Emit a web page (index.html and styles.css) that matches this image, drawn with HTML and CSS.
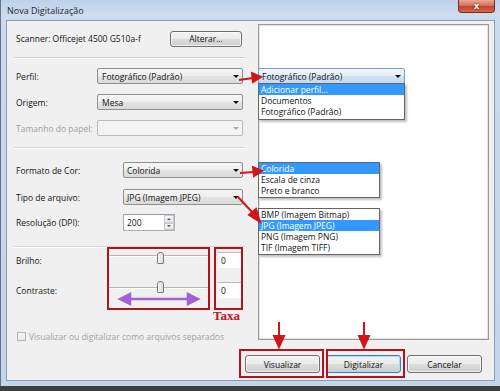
FILE: index.html
```html
<!DOCTYPE html>
<html lang="pt-BR">
<head>
<meta charset="UTF-8">
<title>Nova Digitalização</title>
<link rel="stylesheet" href="styles.css">
</head>
<body>
<div class="window">
    <div class="titlebar">
        <span class="title">Nova Digitalização</span>
        <div class="close-btn">x</div>
    </div>

    <div class="client">
        <div class="settings">
            <div class="row row-tall">
                <span class="label">Scanner: Officejet 4500 G510a-f</span>
                <div class="button button-change">Alterar...</div>
            </div>
            <div class="separator sep-1"></div>

            <div class="row row-perfil">
                <span class="label">Perfil:</span>
                <div class="combo">Fotográfico (Padrão)<i class="caret"></i></div>
            </div>
            <div class="row row-next">
                <span class="label">Origem:</span>
                <div class="combo">Mesa<i class="caret"></i></div>
            </div>
            <div class="row row-next disabled">
                <span class="label">Tamanho do papel:</span>
                <div class="combo"><i class="caret"></i></div>
            </div>
            <div class="separator sep-2"></div>

            <div class="row row-format">
                <span class="label">Formato de Cor:</span>
                <div class="combo combo-short">Colorida<i class="caret"></i></div>
            </div>
            <div class="row row-type">
                <span class="label">Tipo de arquivo:</span>
                <div class="combo combo-short">JPG (Imagem JPEG)<i class="caret"></i></div>
            </div>
            <div class="row row-tall row-dpi">
                <span class="label label-wide">Resolução (DPI):</span>
                <div class="spin">
                    <span class="spin-value">200</span>
                    <span class="spin-arrows">
                        <span class="spin-btn"><i class="up"></i></span>
                        <span class="spin-btn"><i class="down"></i></span>
                    </span>
                </div>
            </div>
            <div class="separator sep-3"></div>

            <div class="row row-bright">
                <span class="label">Brilho:</span>
                <div class="slider"><span class="track"></span><span class="thumb"></span></div>
                <div class="num">0</div>
            </div>
            <div class="row row-contrast">
                <span class="label">Contraste:</span>
                <div class="slider"><span class="track"></span><span class="thumb"></span></div>
                <div class="num">0</div>
            </div>

            <div class="row row-check disabled">
                <span class="checkbox"></span>
                <span class="label">Visualizar ou digitalizar como arquivos separados</span>
            </div>
        </div>

        <div class="preview"></div>

        <div class="footer">
            <div class="button">Visualizar</div>
            <div class="button button-default">Digitalizar</div>
            <div class="button">Cancelar</div>
        </div>
    </div>

    <!-- listas abertas coladas sobre a pré-visualização -->
    <div class="open-combo">Fotográfico (Padrão)<i class="caret"></i></div>
    <ul class="listbox list-profile">
        <li class="selected">Adicionar perfil...</li>
        <li>Documentos</li>
        <li>Fotográfico (Padrão)</li>
    </ul>
    <ul class="listbox list-color">
        <li class="selected">Colorida</li>
        <li>Escala de cinza</li>
        <li>Preto e branco</li>
    </ul>
    <ul class="listbox list-type">
        <li>BMP (Imagem Bitmap)</li>
        <li class="selected">JPG (Imagem JPEG)</li>
        <li>PNG (Imagem PNG)</li>
        <li>TIF (Imagem TIFF)</li>
    </ul>

    <svg class="marks" width="500" height="391" viewBox="0 0 500 391">
        <g fill="none" stroke="#b3141c" stroke-width="2">
            <rect x="108" y="248" width="101" height="61"/>
            <rect x="215" y="248" width="27" height="61"/>
            <rect x="240" y="350" width="83" height="27"/>
            <rect x="327" y="350" width="77" height="27"/>
        </g>
        <g stroke="#d0161b" stroke-width="2" fill="#d0161b">
            <line x1="239" y1="80" x2="253" y2="78"/>
            <polygon points="261,77 252,73 253,82"/>
            <line x1="240" y1="173" x2="254" y2="172"/>
            <polygon points="262,171 253,167 254,176"/>
            <line x1="238" y1="197" x2="253" y2="213"/>
            <polygon points="260,222 249,215 256,209"/>
            <line x1="279" y1="322" x2="279" y2="337"/>
            <polygon points="279,347 274,336 284,336"/>
            <line x1="364" y1="322" x2="364" y2="337"/>
            <polygon points="364,347 359,336 369,336"/>
        </g>
        <g stroke="#a061d6" stroke-width="2.5" fill="#a061d6">
            <line x1="128" y1="299" x2="190" y2="299"/>
            <polygon points="120,299 130,294 130,304"/>
            <polygon points="198,299 188,294 188,304"/>
        </g>
    </svg>
    <span class="taxa">Taxa</span>
</div>
</body>
</html>
```

FILE: styles.css
```css
body {
    margin: 0;
    background-color: #3e3e3e;
    font-family: "Open Sans", "Noto Sans", sans-serif;
    font-size: 8.5px;
    color: #141414;
}

.window {
    position: relative;
    width: 500px;
    height: 386px;
    box-sizing: border-box;
    padding: 0 5px 5px 5px;
    border-left: 1px solid #62758b;
    background: linear-gradient(180deg, #bdd1e8 0, #cddcee 14px, #c9daed 40px, #c2d5ea 100%);
    overflow: hidden;
}

.titlebar {
    display: flex;
    align-items: flex-start;
    height: 20px;
}

.title {
    padding: 4px 0 0 1px;
    font-size: 9px;
    color: #1e2733;
}

.close-btn {
    margin-left: auto;
    width: 35px;
    height: 12px;
    line-height: 11px;
    text-align: center;
    color: #fff;
    font-weight: bold;
    font-size: 9px;
    text-shadow: 0 0 2px #5a1208;
    border: 1px solid #7b2b20;
    border-top: none;
    border-radius: 0 0 4px 4px;
    background: linear-gradient(180deg, #e9a699 0, #d7735f 45%, #c2432b 55%, #d66a48 100%);
}

/* área cinza da janela */
.client {
    display: grid;
    grid-template-columns: 245px 1fr;
    grid-template-rows: 324px 1fr;
    height: 361px;
    box-sizing: border-box;
    border: 1px solid #8a9db3;
    background-color: #f0f0f0;
}

.settings {
    padding: 9px 9px 0 9px;
}

.row {
    display: flex;
    align-items: center;
    height: 16px;
}

.row-tall { height: 17px; }
.row-perfil { margin-top: 9px; }
.row-next { margin-top: 10px; }
.row-format { margin-top: 13px; }
.row-type { margin-top: 11px; }
.row-dpi { margin-top: 9px; }
.row-bright { margin-top: 4px; }
.row-contrast { margin-top: 14px; }
.row-check { margin-top: 31px; height: 14px; }

.label {
    flex: none;
    white-space: nowrap;
}

.label-wide { width: 107px; }

.disabled .label { color: #a2a2a2; }

.separator {
    height: 0;
    margin: 0 -2px;
    border-top: 1px solid #d5d5d5;
    border-bottom: 1px solid #fff;
}

.sep-1 { margin-top: 10px; }
.sep-2 { margin-top: 11px; }
.sep-3 { margin-top: 15px; }

.button {
    display: flex;
    align-items: center;
    justify-content: center;
    width: 75px;
    height: 18px;
    box-sizing: border-box;
    border: 1px solid #707070;
    border-radius: 3px;
    background: linear-gradient(180deg, #f2f2f2 0, #ebebeb 50%, #dddddd 51%, #cfcfcf 100%);
    box-shadow: inset 0 0 0 1px rgba(255, 255, 255, 0.7);
}

.button-change {
    margin-left: auto;
    width: 72px;
    height: 16px;
    margin-right: 1px;
}

.button-default {
    border-color: #3c7fb1;
    box-shadow: inset 0 0 0 1px #a8dcf7;
}

.combo {
    display: flex;
    align-items: center;
    margin-left: auto;
    width: 146px;
    height: 16px;
    box-sizing: border-box;
    padding-left: 4px;
    border: 1px solid #8e8f8f;
    border-radius: 2px;
    background: linear-gradient(180deg, #f6f6f6 0, #eeeeee 50%, #e4e4e4 51%, #dadada 100%);
}

.combo-short { width: 120px; padding-left: 3px; }

.disabled .combo {
    border-color: #b8bcbf;
    background: #f4f4f4;
}

.caret {
    margin-left: auto;
    margin-right: 3px;
    width: 0;
    height: 0;
    border-left: 3px solid transparent;
    border-right: 3px solid transparent;
    border-top: 3px solid #111;
}

.disabled .caret { border-top-color: #a8a8a8; }

.spin {
    display: flex;
    width: 52px;
    height: 17px;
    box-sizing: border-box;
    border: 1px solid #abadb3;
    border-top-color: #9a9da3;
    background-color: #fff;
}

.spin-value {
    flex: 1;
    padding: 2px 0 0 3px;
}

.spin-arrows {
    display: flex;
    flex-direction: column;
    width: 10px;
}

.spin-btn {
    flex: 1;
    display: flex;
    align-items: center;
    justify-content: center;
    border: 1px solid #c8cbd0;
    background: linear-gradient(180deg, #f7f7f7, #e4e4e4);
}

.spin-btn .up,
.spin-btn .down {
    width: 0;
    height: 0;
    border-left: 2px solid transparent;
    border-right: 2px solid transparent;
}

.spin-btn .up { border-bottom: 2px solid #4a5a6e; }
.spin-btn .down { border-top: 2px solid #4a5a6e; }

/* barras de brilho / contraste */
.slider {
    position: relative;
    margin-left: auto;
    width: 99px;
    height: 16px;
}

.slider .track {
    display: block;
    margin-top: 3px;
    height: 0;
    border-top: 1px solid #b4b4b4;
    border-bottom: 1px solid #fff;
}

.slider .thumb {
    position: absolute;
    left: 48px;
    top: 0;
    width: 5px;
    height: 10px;
    border: 1px solid #7a7a7a;
    border-radius: 3px 3px 1px 1px;
    background: linear-gradient(90deg, #f8f8f8, #dcdcdc);
}

.row-contrast .slider .track { margin-top: 5px; }
.row-contrast .slider .thumb { top: -1px; }

.num {
    width: 25px;
    height: 16px;
    margin-left: 10px;
    box-sizing: border-box;
    padding: 2px 0 0 3px;
    border-top: 1px solid #b9b9b9;
    background-color: #fff;
}

.checkbox {
    width: 9px;
    height: 9px;
    margin-left: 1px;
    margin-right: 3px;
    box-sizing: border-box;
    border: 1px solid #b5b5b5;
    background: linear-gradient(180deg, #f6f6f6, #e9e9e9);
}

.preview {
    margin: 3px 5px 5px 6px;
    border: 1px solid #9a9a9a;
    box-shadow: inset 0 0 0 1px #e2e2e2;
    background-color: #fff;
}

.footer {
    grid-column: 1 / -1;
    display: flex;
    justify-content: flex-end;
    align-items: flex-start;
    gap: 6px;
    padding: 10px 12px 0 0;
}

/* listas abertas */
.open-combo {
    position: absolute;
    left: 257px;
    top: 68px;
    display: flex;
    align-items: center;
    width: 147px;
    height: 16px;
    box-sizing: border-box;
    padding-left: 3px;
    border: 1px solid #7f9dbd;
    border-radius: 2px;
    background: linear-gradient(180deg, #f3f7fb 0, #e2ecf6 50%, #d1e1f1 51%, #c6d9ee 100%);
}

.listbox {
    position: absolute;
    left: 257px;
    margin: 0;
    padding: 0 0 1px 0;
    list-style: none;
    border: 1px solid #646464;
    background-color: #fff;
    box-shadow: 2px 2px 2px rgba(0, 0, 0, 0.25);
}

.listbox li {
    height: 11px;
    line-height: 11px;
    padding-left: 2px;
    white-space: nowrap;
}

.listbox li.selected {
    background-color: #3399ff;
    color: #fff;
}

.list-profile { top: 83px; width: 145px; padding-bottom: 2px; }
.list-color { top: 162px; width: 120px; }
.list-type { top: 208px; width: 120px; }

.marks {
    position: absolute;
    left: -1px;
    top: 0;
    pointer-events: none;
}

.taxa {
    position: absolute;
    left: 212px;
    top: 309px;
    line-height: 13px;
    font-family: "Liberation Serif", serif;
    font-size: 13px;
    font-weight: bold;
    color: #c0141c;
}
```
